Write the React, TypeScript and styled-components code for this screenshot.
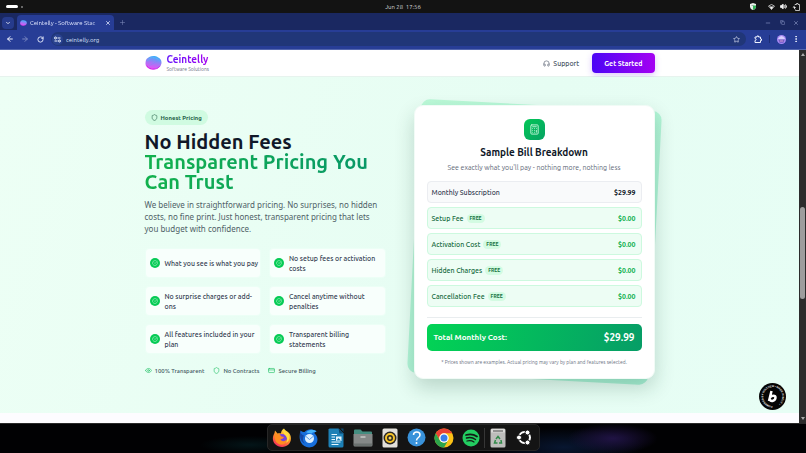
import React from 'react';
import styled, { createGlobalStyle, css } from 'styled-components';
import {
  ArrowLeft, ArrowRight, Calculator, ChevronDown, CircleCheckBig, CreditCard, Eye, EllipsisVertical,
  Headphones, Plus, RotateCw, Shield, Star, Volume2, X, Minus, Copy,
} from 'lucide-react';

const display = '"Ubuntu", "Noto Sans", "Open Sans", sans-serif';
const body = '"Ubuntu", Roboto, "Noto Sans", sans-serif';
const prose = '"Noto Sans", "Open Sans", sans-serif';

const GlobalStyle = createGlobalStyle`
  * { box-sizing: border-box; }
  html, body, #root { height: 100%; }
  body { margin: 0; font-family: ${body}; overflow: hidden; background: #010103; }
  button { border: 0; padding: 0; background: none; font: inherit; color: inherit; cursor: pointer; }
  h1, h2, p, ul, dl, dd, dt { margin: 0; padding: 0; }
  ul { list-style: none; }
  svg { display: block; flex: none; }
`;

const Desktop = styled.div`
  height: 100vh;
  display: flex;
  flex-direction: column;
  overflow: hidden;
`;

/* System bar */
const SystemBar = styled.header`
  flex: none;
  height: 13px;
  display: grid;
  grid-template-columns: 1fr auto 1fr;
  align-items: center;
  padding: 0 6px;
  background: #131313;
  color: #dcdcdc;
  font-size: 6px;
  white-space: pre;
`;
const Workspaces = styled.div`
  display: flex;
  align-items: center;
  gap: 3px;
`;
const WorkspaceDot = styled.span<{ $active?: boolean }>`
  width: ${p => (p.$active ? 12 : 2)}px;
  height: ${p => (p.$active ? 3 : 2)}px;
  border-radius: 2px;
  background: ${p => (p.$active ? '#fff' : '#858585')};
`;
const Tray = styled.div`
  display: flex;
  justify-content: flex-end;
  align-items: center;
  gap: 5px;
  color: #f1f1f1;
`;
const ShieldSlot = styled.span`
  margin-right: 7px;
`;

/* Browser */
const TabStrip = styled.div`
  flex: none;
  height: 17px;
  display: flex;
  align-items: center;
  padding: 2px 4px 0 2px;
  background: #1a2861;
  color: #c9d3f5;
`;
const StripButton = styled.button<{ $filled?: boolean; $dim?: boolean }>`
  display: grid;
  place-items: center;
  width: 12px;
  height: 12px;
  border-radius: 4px;
  ${p => p.$filled && css`background: #263b8c; color: #fff;`}
  ${p => p.$dim && css`color: #7884b5;`}
`;
const Tab = styled.div`
  align-self: stretch;
  min-width: 97px;
  margin: 0 2px 0 3px;
  padding: 0 3px;
  display: flex;
  align-items: center;
  gap: 3px;
  border-radius: 4px 4px 0 0;
  background: #273d96;
  color: #e3e9ff;
  font-size: 6px;
`;
const TabTitle = styled.span`
  flex: 1;
  white-space: nowrap;
  mask-image: linear-gradient(90deg, #000 82%, #0004);
`;
const WindowControls = styled.div`
  margin-left: auto;
  display: flex;
  gap: 2px;
`;
const Toolbar = styled.div`
  flex: none;
  height: 20px;
  display: flex;
  align-items: center;
  gap: 3px;
  padding: 0 4px 1px 4px;
  background: #273d96;
  border-bottom: 1px solid #5366ad;
  color: #eef2ff;
`;
const ToolButton = styled.button<{ $dim?: boolean }>`
  display: grid;
  place-items: center;
  width: 12px;
  height: 12px;
  opacity: ${p => (p.$dim ? 0.4 : 1)};
`;
const AddressBar = styled.div`
  flex: 1;
  height: 14px;
  margin: 0 3px 0 2px;
  padding: 0 6px 0 1px;
  display: flex;
  align-items: center;
  gap: 3px;
  border-radius: 7px;
  background: #203678;
`;
const SiteButton = styled.button`
  display: grid;
  place-items: center;
  width: 11px;
  height: 11px;
  border-radius: 50%;
  background: #29428f;
`;
const AddressInput = styled.input`
  flex: 1;
  min-width: 0;
  border: 0;
  padding: 0;
  outline: 0;
  background: transparent;
  color: #dde5ff;
  font: 400 6px ${body};
`;
const ToolDivider = styled.span`
  width: 1px;
  height: 8px;
  margin: 0 2px;
  background: #1b2c74;
`;

const Viewport = styled.div`
  position: relative;
  flex: 1;
  min-height: 0;
  display: flex;
`;
const Page = styled.div`
  flex: 1;
  min-width: 0;
  display: flex;
  flex-direction: column;
  overflow: hidden;
  background: #fdfcff;
`;
const Scrollbar = styled.div`
  flex: none;
  width: 7px;
  padding: 3px 1px;
  display: flex;
  flex-direction: column;
  align-items: center;
  background: #2c2c2c;
`;
const ScrollTrack = styled.div`
  flex: 1;
  width: 5px;
  display: grid;
  grid-template-rows: 151fr 91fr 118fr;
`;
const ScrollThumb = styled.span`
  grid-row: 2;
  border-radius: 3px;
  background: #9d9d9d;
`;
const ScrollArrow = styled.span<{ $down?: boolean }>`
  border: 2px solid transparent;
  ${p => (p.$down ? 'border-top: 3px solid #a9a9a9; border-bottom: 0;' : 'border-bottom: 3px solid #a9a9a9; border-top: 0;')}
`;

/* Site */
const Container = styled.div`
  width: 63%;
  min-width: 510px;
  max-width: 1280px;
  margin: 0 auto;
`;
const SiteHeader = styled.header`
  flex: none;
  background: #fff;
  border-bottom: 1px solid #e7f3ee;
`;
const HeaderRow = styled(Container)`
  height: 26px;
  display: flex;
  align-items: center;
  justify-content: space-between;
`;
const Brand = styled.a`
  display: flex;
  align-items: center;
  gap: 5px;
  color: inherit;
  text-decoration: none;
`;
const BrandName = styled.strong`
  display: block;
  font: 700 10px/12px ${display};
  background: linear-gradient(90deg, #6414fa, #a404f0);
  background-clip: text;
  color: transparent;
`;
const BrandTag = styled.span`
  display: block;
  font-size: 5px;
  line-height: 7px;
  color: #6a7282;
`;
const HeaderActions = styled.nav`
  display: flex;
  align-items: center;
  gap: 13px;
`;
const SupportLink = styled.a`
  display: flex;
  align-items: center;
  gap: 3px;
  color: #4a5565;
  font-size: 7px;
  font-weight: 500;
  text-decoration: none;
`;
const StartButton = styled.button`
  height: 20px;
  padding: 0 12px;
  border-radius: 4px;
  background: linear-gradient(90deg, #4b05f5, #a401f2);
  box-shadow: 0 2px 6px #6a20f040;
  color: #fff;
  font-size: 7px;
  font-weight: 600;
`;

const Pricing = styled.section`
  flex: none;
  padding: 28px 0 34px;
  background: linear-gradient(110deg, #edfff5, #e6fdf3 60%, #e7fef5);
  overflow: hidden;
`;
const PricingGrid = styled(Container)`
  display: grid;
  grid-template-columns: 1fr 1fr;
  gap: 28px;
  align-items: center;
`;
const Intro = styled.div`
  display: flex;
  flex-direction: column;
  align-items: flex-start;
`;
const Pill = styled.div`
  height: 15px;
  padding: 0 6px;
  display: flex;
  align-items: center;
  gap: 3px;
  border-radius: 8px;
  background: #d0fbe1;
  color: #246147;
  font-size: 6px;
  font-weight: 600;
`;
const Headline = styled.h1`
  margin-top: 7px;
  font: 600 20px/20px ${display};
  color: #101828;
`;
const HeadlineAccent = styled.span`
  display: block;
  background: linear-gradient(90deg, #12b14d, #089669);
  background-clip: text;
  color: transparent;
`;
const Lead = styled.p`
  margin-top: 7px;
  font: 400 8px/12px ${prose};
  color: #4f6167;
`;
const Benefits = styled.ul`
  align-self: stretch;
  margin-top: 13px;
  display: grid;
  grid-template-columns: 1fr 1fr;
  gap: 8px;
`;
const Benefit = styled.li`
  height: 30px;
  padding: 0 1px 0 4px;
  display: flex;
  align-items: center;
  gap: 5px;
  border: 1px solid #ecfff6;
  border-radius: 4px;
  background: #f8fffc;
  color: #364153;
  font-size: 7px;
  font-weight: 500;
  line-height: 10px;
`;
const CheckMark = styled.span`
  flex: none;
  display: grid;
  place-items: center;
  width: 10px;
  height: 10px;
  border-radius: 50%;
  background: #06cb55;
  color: #d4ffe5;
`;
const Assurances = styled.ul`
  margin-top: 13px;
  display: flex;
  gap: 9px;
`;
const Assurance = styled.li`
  display: flex;
  align-items: center;
  gap: 3px;
  color: #405660;
  font-size: 6px;
  font-weight: 500;
  line-height: 8px;

  svg { color: #13bb5b; }
`;

const CardStage = styled.div`
  position: relative;
`;
const CardTilt = styled.div`
  position: absolute;
  inset: 0;
  border-radius: 9px;
  background: linear-gradient(135deg, #bbf9d8, #a8f0d5);
  transform: rotate(3deg);
`;
const BillCard = styled.div`
  position: relative;
  padding: 13px 12px;
  border-radius: 9px;
  background: #fff;
  border: 1px solid #f1fbf6;
  box-shadow: 0 9px 20px #0b3b2a33;
  display: flex;
  flex-direction: column;
`;
const BillIcon = styled.div`
  align-self: center;
  display: grid;
  place-items: center;
  width: 21px;
  height: 21px;
  border-radius: 6px;
  background: linear-gradient(135deg, #04c757, #06a263);
  color: #c9f7de;
`;
const BillTitle = styled.h2`
  margin-top: 6px;
  text-align: center;
  font: 600 10px/13px ${display};
  color: #101828;
`;
const BillSubtitle = styled.p`
  margin-top: 4px;
  text-align: center;
  font-size: 7px;
  line-height: 8px;
  color: #5d6676;
`;
const BillLines = styled.dl`
  margin-top: 10px;
  display: flex;
  flex-direction: column;
  gap: 4px;
`;
const BillLine = styled.div<{ $free: boolean }>`
  height: 22px;
  padding: 0 5px 0 4px;
  display: flex;
  align-items: center;
  justify-content: space-between;
  border: 1px solid ${p => (p.$free ? '#cdf9df' : '#ebedf1')};
  border-radius: 4px;
  background: ${p => (p.$free ? '#edfdf4' : '#f9fafb')};
  color: ${p => (p.$free ? '#166b40' : '#364153')};
  font-size: 7px;
`;
const LineName = styled.dt`
  display: flex;
  align-items: center;
  gap: 3px;
  font-weight: 500;
`;
const LineAmount = styled.dd<{ $free: boolean }>`
  font-weight: 700;
  color: ${p => (p.$free ? '#0caf4d' : '#101828')};
`;
const FreeTag = styled.span`
  padding: 0 3px;
  border-radius: 5px;
  background: #d3fbe2;
  color: #16713f;
  font-size: 5px;
  font-weight: 600;
  line-height: 9px;
`;
const BillDivider = styled.hr`
  width: 100%;
  height: 1px;
  margin: 10px 0 6px;
  border: 0;
  background: #e9edef;
`;
const Total = styled.div`
  height: 27px;
  padding: 0 7px;
  display: flex;
  align-items: center;
  justify-content: space-between;
  border-radius: 5px;
  background: linear-gradient(100deg, #02d355, #069d66);
  color: #fff;
  font-size: 8px;
  font-weight: 700;
`;
const TotalAmount = styled.strong`
  font: 700 10px ${body};
`;
const Footnote = styled.p`
  margin-top: 8px;
  text-align: center;
  font-size: 5px;
  line-height: 6px;
  color: #6a7282;
`;

const BuiltBadge = styled.a`
  position: absolute;
  right: 20px;
  bottom: 13px;
`;

/* Dock */
const DockArea = styled.footer`
  flex: none;
  height: 30px;
  display: flex;
  justify-content: center;
  align-items: flex-start;
  border-top: 1px solid #2a2a2a;
  background:
    radial-gradient(ellipse 50px 9px at 31% 72%, #05262b88, transparent),
    radial-gradient(ellipse 45px 15px at 76% 50%, #201344, transparent),
    radial-gradient(ellipse 80px 20px at 70% 80%, #081630, transparent),
    #010103;
`;
const Dock = styled.nav`
  height: 27px;
  padding: 0 3px;
  display: flex;
  align-items: center;
  gap: 5px;
  border: 1px solid #272727;
  border-radius: 5px;
  background: #141414;
`;
const DockButton = styled.button`
  display: grid;
  place-items: center;
  width: 22px;
  height: 24px;
`;
const DockDivider = styled.span`
  width: 1px;
  height: 20px;
  margin: 0 -3px;
  background: #363636;
`;

const Logo = ({ size = 18 }: { size?: number }) => (
  <svg width={size} height={Math.round(size * 5 / 6)} viewBox="0 0 36 30" aria-hidden="true">
    <defs>
      <linearGradient id="brand" x1=".65" y1="0" x2=".35" y2="1">
        <stop offset="0" stopColor="#38b3fa" /><stop offset=".5" stopColor="#a377f5" /><stop offset="1" stopColor="#f04df5" />
      </linearGradient>
    </defs>
    <path fill="url(#brand)" d="M9 2C14-.5 23-.5 28 3c5 2 8 7 7 13-1 6-4 9-9 11-5 3-14 3-18 0C3 25 0 20 1 14 1 8 4 4 9 2Z" />
    <path d="M4 21c4 6 9 7 14 7s10-1 13-6" fill="none" stroke="#c719df" strokeWidth="2" strokeDasharray="2 1" />
    <path d="M5 11C8 4 13 3 19 4s8 2 12 7" fill="none" stroke="#55b8f8" strokeWidth="2" strokeDasharray="2 1" />
    <path d="M9 21C15 17 23 14 29 9" fill="none" stroke="#6c98f5" strokeOpacity=".4" strokeWidth="2" />
  </svg>
);

const SecurityIcon = () => (
  <svg width="6" height="7" viewBox="0 0 12 14"><path fill="#e9efe9" d="M6 0l6 2v5c0 3-2 6-6 7-4-1-6-4-6-7V2Z" /><path fill="#31b457" d="M6 5h6v3c-1 3-3 5-6 6Z" /><path d="M3 5h4" stroke="#547b60" /></svg>
);
const WifiIcon = () => (
  <svg width="7" height="6" viewBox="0 0 14 12"><path d="M1 4Q7-2 13 4L7 11Z" fill="none" stroke="currentColor" strokeWidth="1.4" /><path d="M3 5h8l-4 6Z" fill="currentColor" /></svg>
);
const BatteryIcon = () => (
  <svg width="8" height="8" viewBox="0 0 16 16" fill="none" stroke="currentColor" strokeWidth="1.5"><path d="M6 4V3h3V1h3v2h3v12H7v-2" /><path d="M5 5L1 9h3v4l4-5H5Z" fill="currentColor" stroke="none" /></svg>
);
const AvatarIcon = () => (
  <svg width="9" height="9" viewBox="0 0 18 18"><circle cx="9" cy="9" r="9" fill="#aa8af5" /><path d="M2 7Q9-3 16 7l-3 3H5Z" fill="#d8ceff" /><path d="M3 9h12l-2 6H5Z" fill="#503fae" /><path d="M5 12h8" stroke="#f3b5ed" strokeWidth="2" /></svg>
);
const TuneIcon = () => (
  <svg width="7" height="7" viewBox="0 0 14 14" fill="none" stroke="currentColor" strokeWidth="2"><circle cx="3" cy="4" r="2" /><path d="M7 4h6M1 10h6" /><circle cx="11" cy="10" r="2" /></svg>
);
const ExtensionIcon = () => (
  <svg width="8" height="8" viewBox="0 0 16 16" fill="none" stroke="currentColor" strokeWidth="2" strokeLinejoin="round"><path d="M2 4h4V2h3v2h4v4h2v3h-2v4H2v-4c3 0 3-4 0-4Z" /></svg>
);

const FirefoxIcon = () => (
  <svg width="20" height="20" viewBox="0 0 40 40">
    <defs><linearGradient id="ff" x1=".8" y1="0" x2=".3" y2="1"><stop offset="0" stopColor="#fff04a" /><stop offset=".45" stopColor="#ff9825" /><stop offset="1" stopColor="#f52b5d" /></linearGradient></defs>
    <path fill="url(#ff)" d="M24 1c2 4 6 5 9 8 7 7 6 18 0 24-8 7-20 6-27-1C-1 24 2 15 5 10l1-5 5 6c3-1 5-1 7 0 0-4 2-8 6-10Z" />
    <circle cx="20" cy="22" r="10" fill="#7543d8" />
    <path fill="#ff8d20" d="M5 14c5-4 11-1 14 3l5 1c-1 3-5 4-7 5 3 5 10 4 13-1 0 8-6 12-13 11C9 32 5 25 5 14Z" />
    <path fill="#ffdc3f" d="M23 3c-2 7 2 9 5 13 4 6 2 11-1 14 8-3 10-12 5-19-3-3-7-3-9-8Z" />
  </svg>
);
const ThunderbirdIcon = () => (
  <svg width="20" height="20" viewBox="0 0 40 40">
    <path fill="#176edb" d="M3 5c3 2 5 3 8 3C18 0 29 1 35 7c-3 1-4 2-4 4 9 7 7 20-1 25-9 6-22 2-26-7C0 21 1 13 3 5Z" />
    <path fill="#45b3fa" d="M14 9c7-8 17-6 21-2-5 1-8 2-10 4Z" /><path fill="#1347a6" d="M3 6c0 5 3 8 7 9-3 5-3 12 2 16C4 29 0 18 3 6Z" />
    <circle cx="21" cy="21" r="9" fill="#dcefff" /><path d="M14 17l7 6 7-6" fill="none" stroke="#5b9be5" strokeWidth="2" />
  </svg>
);
const WriterIcon = () => (
  <svg width="16" height="20" viewBox="0 0 32 40">
    <path fill="#1d80b6" d="M3 1h18l10 10v25q0 3-3 3H4q-3 0-3-3V3Z" /><path fill="#0b476e" d="M21 1l10 10h-8ZM25 1h6v7Z" />
    <path d="M7 13h11M7 18h7M7 23h7M7 28h18M7 33h14" stroke="#e8f8ff" strokeWidth="2" /><path fill="#e1f5ff" d="M16 17h11v9H16Z" /><path d="M17 25l4-5 5 5" fill="#1d80b6" />
  </svg>
);
const FilesIcon = () => (
  <svg width="20" height="18" viewBox="0 0 40 36"><path fill="#448d80" d="M2 3q0-2 2-2h11l4 4h17q2 0 2 2v8H2Z" /><path fill="#858988" d="M1 10h38v22q0 3-3 3H4q-3 0-3-3Z" /><path d="M15 16h10" stroke="#d6d8d6" strokeWidth="2.5" /><path d="M2 29h36v3q0 2-2 2H4q-2 0-2-2Z" fill="#6a716f" /></svg>
);
const RhythmboxIcon = () => (
  <svg width="16" height="20" viewBox="0 0 32 40"><rect x="1" y="1" width="30" height="38" rx="3" fill="#e3e0da" /><circle cx="16" cy="20" r="13" fill="#292724" /><circle cx="16" cy="20" r="8" fill="none" stroke="#f6c329" strokeWidth="4" /><circle cx="16" cy="20" r="3" fill="#f8d65b" /></svg>
);
const HelpIcon = () => (
  <svg width="19" height="19" viewBox="0 0 38 38"><circle cx="19" cy="19" r="18" fill="#3992da" /><path d="M13 14c0-8 13-8 13 0 0 5-7 5-7 11" fill="none" stroke="#fff" strokeWidth="3" /><circle cx="19" cy="30" r="2" fill="#fff" /></svg>
);
const ChromeIcon = () => (
  <svg width="20" height="20" viewBox="0 0 40 40"><circle cx="20" cy="20" r="19" fill="#fbc116" /><path fill="#e94135" d="M3.5 10.5a19 19 0 0 1 33 0H20a9.5 9.5 0 0 0-8.2 14.3Z" /><path fill="#2ca54c" d="M3.5 10.5l8.3 14.3a9.5 9.5 0 0 0 16.4 0L20 39A19 19 0 0 1 3.5 10.5Z" /><circle cx="20" cy="20" r="9.5" fill="#fff" /><circle cx="20" cy="20" r="7" fill="#397eea" /></svg>
);
const SpotifyIcon = () => (
  <svg width="18" height="18" viewBox="0 0 36 36"><circle cx="18" cy="18" r="17" fill="#22cd61" /><g fill="none" stroke="#121b15" strokeLinecap="round"><path d="M8 12q12-4 22 3" strokeWidth="3.5" /><path d="M9 18q10-3 18 3" strokeWidth="3" /><path d="M10 24q8-2 14 2" strokeWidth="2.5" /></g></svg>
);
const TrashIcon = () => (
  <svg width="16" height="20" viewBox="0 0 32 40"><rect x="1" y="1" width="30" height="38" rx="3" fill="#bdbdbb" /><path d="M2 4q0-2 2-2h24q2 0 2 2v5H2Z" fill="#dadad8" /><path d="M6 6h20" stroke="#666" strokeWidth="2.5" /><g fill="none" stroke="#318b4a" strokeWidth="3"><path d="M12 22l4-5 4 5M22 24l1 6h-5M15 30H9l2-6" /></g></svg>
);
const UbuntuIcon = () => (
  <svg width="17" height="17" viewBox="0 0 34 34">
    <circle cx="17" cy="17" r="11" fill="none" stroke="#fff" strokeWidth="4" />
    <g fill="#fff" stroke="#141414" strokeWidth="2"><circle cx="6" cy="17" r="5" /><circle cx="23" cy="7" r="5" /><circle cx="23" cy="27" r="5" /></g>
  </svg>
);
const BadgeArt = () => (
  <svg width="27" height="27" viewBox="0 0 54 54">
    <defs><path id="ring" d="M27 46a19 19 0 1 1 1 0" /></defs>
    <circle cx="27" cy="27" r="27" fill="#050505" />
    <text fill="#fff" fontFamily="Liberation Sans" fontWeight="700" fontSize="5"><textPath href="#ring">POWERED BY BOLT.NEW • MADE IN BOLT •</textPath></text>
    <path d="M25 16l-5 20M22 29c3-5 11-5 11 0 0 7-9 9-12 4" fill="none" stroke="#fff" strokeWidth="5" strokeLinejoin="round" />
  </svg>
);

const benefits = [
  'What you see is what you pay', 'No setup fees or activation costs',
  'No surprise charges or add-ons', 'Cancel anytime without penalties',
  'All features included in your plan', 'Transparent billing statements',
];
const assurances = [
  { icon: Eye, text: '100% Transparent' },
  { icon: Shield, text: 'No Contracts' },
  { icon: CreditCard, text: 'Secure Billing' },
];
const lines = [
  { name: 'Monthly Subscription', amount: '$29.99', free: false },
  { name: 'Setup Fee', amount: '$0.00', free: true },
  { name: 'Activation Cost', amount: '$0.00', free: true },
  { name: 'Hidden Charges', amount: '$0.00', free: true },
  { name: 'Cancellation Fee', amount: '$0.00', free: true },
];
const dockApps = [
  { name: 'Firefox', Icon: FirefoxIcon }, { name: 'Thunderbird', Icon: ThunderbirdIcon },
  { name: 'Writer', Icon: WriterIcon }, { name: 'Files', Icon: FilesIcon },
  { name: 'Rhythmbox', Icon: RhythmboxIcon }, { name: 'Help', Icon: HelpIcon },
  { name: 'Chrome', Icon: ChromeIcon }, { name: 'Spotify', Icon: SpotifyIcon },
];

export default function App() {
  return (
    <Desktop>
      <GlobalStyle />
      <SystemBar>
        <Workspaces><WorkspaceDot $active /><WorkspaceDot /></Workspaces>
        <time>{'Jun 28  17:56'}</time>
        <Tray><ShieldSlot><SecurityIcon /></ShieldSlot><WifiIcon /><Volume2 size={7} fill="currentColor" strokeWidth={3} /><BatteryIcon /></Tray>
      </SystemBar>

      <TabStrip>
        <StripButton $filled aria-label="Search tabs"><ChevronDown size={6} strokeWidth={3} /></StripButton>
        <Tab>
          <Logo size={7} />
          <TabTitle>Ceintelly - Software Stac</TabTitle>
          <X size={6} strokeWidth={3} />
        </Tab>
        <StripButton $dim aria-label="New tab"><Plus size={7} /></StripButton>
        <WindowControls>
          <StripButton $dim aria-label="Minimize"><Minus size={6} strokeWidth={3} /></StripButton>
          <StripButton $dim aria-label="Restore"><Copy size={5} strokeWidth={3} /></StripButton>
          <StripButton $dim aria-label="Close"><X size={6} strokeWidth={3} /></StripButton>
        </WindowControls>
      </TabStrip>

      <Toolbar>
        <ToolButton aria-label="Back"><ArrowLeft size={8} strokeWidth={3} /></ToolButton>
        <ToolButton aria-label="Forward" $dim><ArrowRight size={8} strokeWidth={3} /></ToolButton>
        <ToolButton aria-label="Reload"><RotateCw size={7} strokeWidth={3} /></ToolButton>
        <AddressBar>
          <SiteButton aria-label="Site information"><TuneIcon /></SiteButton>
          <AddressInput aria-label="Address" defaultValue="ceintelly.org" />
          <Star size={7} strokeWidth={2} />
        </AddressBar>
        <ToolButton aria-label="Extensions"><ExtensionIcon /></ToolButton>
        <ToolDivider />
        <ToolButton aria-label="Profile"><AvatarIcon /></ToolButton>
        <ToolButton aria-label="Menu"><EllipsisVertical size={8} strokeWidth={3} /></ToolButton>
      </Toolbar>

      <Viewport>
        <Page>
          <SiteHeader>
            <HeaderRow>
              <Brand href="#">
                <Logo size={17} />
                <span><BrandName>Ceintelly</BrandName><BrandTag>Software Solutions</BrandTag></span>
              </Brand>
              <HeaderActions>
                <SupportLink href="#support"><Headphones size={7} />Support</SupportLink>
                <StartButton>Get Started</StartButton>
              </HeaderActions>
            </HeaderRow>
          </SiteHeader>

          <Pricing>
            <PricingGrid>
              <Intro>
                <Pill><Shield size={7} />Honest Pricing</Pill>
                <Headline>No Hidden Fees<HeadlineAccent>Transparent Pricing You Can Trust</HeadlineAccent></Headline>
                <Lead>We believe in straightforward pricing. No surprises, no hidden costs, no fine print. Just honest, transparent pricing that lets you budget with confidence.</Lead>
                <Benefits>
                  {benefits.map(text => (
                    <Benefit key={text}><CheckMark><CircleCheckBig size={6} /></CheckMark><span>{text}</span></Benefit>
                  ))}
                </Benefits>
                <Assurances>
                  {assurances.map(({ icon: Icon, text }) => <Assurance key={text}><Icon size={7} />{text}</Assurance>)}
                </Assurances>
              </Intro>

              <CardStage>
                <CardTilt />
                <BillCard>
                  <BillIcon><Calculator size={11} /></BillIcon>
                  <BillTitle>Sample Bill Breakdown</BillTitle>
                  <BillSubtitle>See exactly what you'll pay - nothing more, nothing less</BillSubtitle>
                  <BillLines>
                    {lines.map(({ name, amount, free }) => (
                      <BillLine key={name} $free={free}>
                        <LineName>{name}{free && <FreeTag>FREE</FreeTag>}</LineName>
                        <LineAmount $free={free}>{amount}</LineAmount>
                      </BillLine>
                    ))}
                  </BillLines>
                  <BillDivider />
                  <Total><span>Total Monthly Cost:</span><TotalAmount>$29.99</TotalAmount></Total>
                  <Footnote>* Prices shown are examples. Actual pricing may vary by plan and features selected.</Footnote>
                </BillCard>
              </CardStage>
            </PricingGrid>
          </Pricing>
        </Page>
        <BuiltBadge href="#built" aria-label="Built with"><BadgeArt /></BuiltBadge>
        <Scrollbar><ScrollArrow /><ScrollTrack><ScrollThumb /></ScrollTrack><ScrollArrow $down /></Scrollbar>
      </Viewport>

      <DockArea>
        <Dock>
          {dockApps.map(({ name, Icon }) => <DockButton key={name} aria-label={name}><Icon /></DockButton>)}
          <DockDivider />
          <DockButton aria-label="Trash"><TrashIcon /></DockButton>
          <DockButton aria-label="Show apps"><UbuntuIcon /></DockButton>
        </Dock>
      </DockArea>
    </Desktop>
  );
}
